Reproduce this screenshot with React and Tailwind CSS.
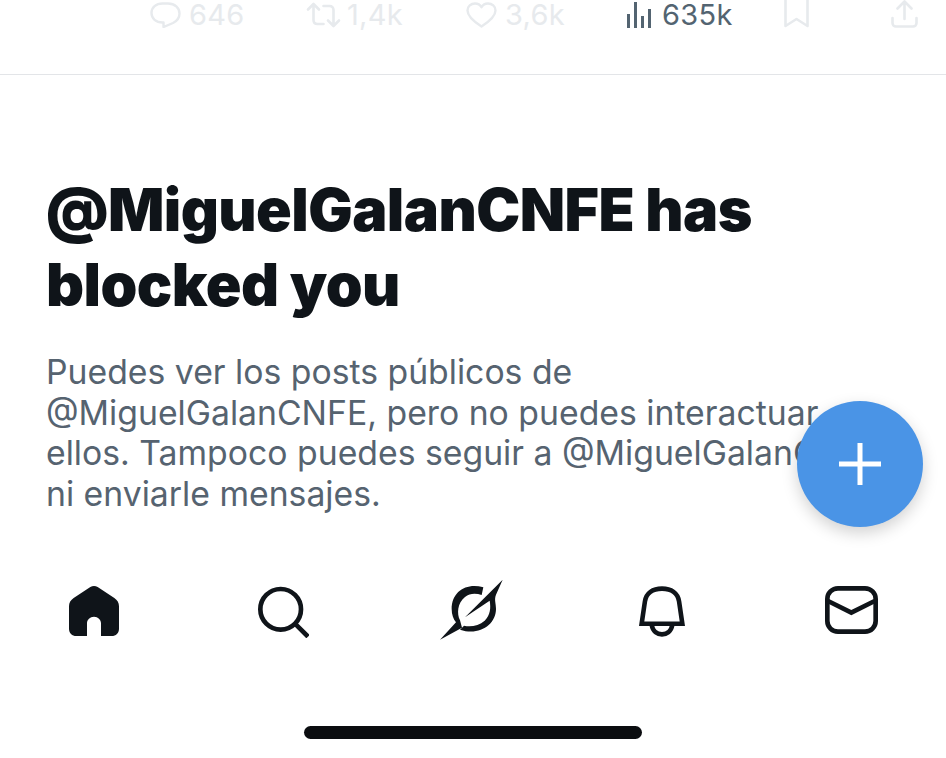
// Blocked profile screen, mobile layout
import React from 'react'

const FAINT = '#e7eaed'

function Stat({ icon, value, color, gap, className }) {
  return (
    <div className={`flex items-center ${gap} ${className}`}>
      {icon}
      {value && <span className="text-[29px] leading-[30px] tracking-[0.3px] whitespace-nowrap" style={{ color }}>{value}</span>}
    </div>
  )
}

function Comment() {
  return (
    <svg width="31" height="26" viewBox="0 0 31 26" fill="none" stroke={FAINT} strokeWidth="2.4" strokeLinejoin="round">
      <path d="M12.500 1.500h5.500c6.800 0 11.500 4.500 11.500 10 0 4-2.500 7.500-6.500 9.500l-9.500 4v-4.500h-1C6 20.500 1.500 16.500 1.500 11S6 1.500 12.500 1.500z" />
    </svg>
  )
}

function Retweet() {
  return (
    <svg width="35" height="26" viewBox="0 0 34 26" fill="none" stroke={FAINT} strokeWidth="2.600" strokeLinecap="round" strokeLinejoin="round">
      <path d="M1.500 7.500L7 2l5.500 5.500M7 3v15c0 2.500 1.500 4 4 4h6" />
      <path d="M32.500 18.500L27 24l-5.500-5.500M27 23V8c0-2.500-1.500-4-4-4h-6" />
    </svg>
  )
}

function Heart() {
  return (
    <svg width="31" height="26" viewBox="0 0 31 26" fill="none" stroke={FAINT} strokeWidth="2.4" strokeLinejoin="round">
      <path d="M15.500 24.500C7 19 1.500 14 1.500 8.500c0-4.200 3.500-7 7.500-7 3 0 5.200 1.400 6.500 3.800 1.300-2.400 3.500-3.800 6.500-3.800 4 0 7.500 2.800 7.500 7 0 5.500-5.500 10.500-14 16z" />
    </svg>
  )
}

function Views() {
  return (
    <svg width="24" height="28" viewBox="0 0 24 28" fill="#536471">
      <rect x="0" y="13" width="3" height="14" />
      <rect x="7" y="1" width="3" height="26" />
      <rect x="14" y="15" width="3" height="12" />
      <rect x="21" y="8" width="3" height="19" />
    </svg>
  )
}

function Bookmark() {
  return (
    <svg width="25" height="28" viewBox="0 0 25 28" fill="none" stroke={FAINT} strokeWidth="2.600" strokeLinejoin="round">
      <path d="M1.500 0v26l11-7 11 7V0" />
    </svg>
  )
}

function Share() {
  return (
    <svg width="27" height="28" viewBox="0 0 27 28" fill="none" stroke={FAINT} strokeWidth="2.600" strokeLinecap="round" strokeLinejoin="round">
      <path d="M6.500 8.500l7-7 7 7M13.500 2v17" />
      <path d="M1.500 18v5c0 2 1.500 3.500 3.500 3.500h17c2 0 3.500-1.500 3.500-3.500v-5" />
    </svg>
  )
}

function Home() {
  return (
    <svg width="50" height="50" viewBox="58 47 150 150" fill="#0f1419">
      <path d="M122 50c7-4 15-4 22 0l50 33c9 6 14 14 14 25v67c0 13-9 22-22 22h-32v-38c0-11-9-20-21-20s-21 9-21 20v38H80c-13 0-22-9-22-22v-67c0-11 5-19 14-25z" />
    </svg>
  )
}

function Search() {
  return (
    <svg width="52" height="52" viewBox="620 42 156 156" fill="none" stroke="#0f1419" strokeWidth="14" strokeLinecap="round">
      <circle cx="691" cy="112" r="61" />
      <path d="M736 157l32 32" strokeLinecap="square" />
    </svg>
  )
}

function Explore() {
  return (
    <svg width="64" height="62" viewBox="57 28 192 186" fill="#0f1419">
      <path d="M190 53C140 38 95 65 95 118c0 17 5 30 13 40l-48 52 66-36-6-22c-10-20-8-52 15-70 15-12 33-11 50-6z" />
      <path d="M248 30L135 143l74-50c4 22 2 42-15 60-17 15-42 20-62 15l-12 12c57 20 108-15 108-62 0-18-6-28 0-43z" />
    </svg>
  )
}

function Bell() {
  return (
    <svg width="46" height="51" viewBox="55 46 140 153" fill="none" stroke="#0f1419" strokeWidth="14">
      <path d="M63 160l10-68c4-26 24-39 52-39s48 13 52 39l10 68z" strokeLinejoin="miter" />
      <path d="M94 165c6 36 56 36 62 0" />
    </svg>
  )
}

function Mail() {
  return (
    <svg width="53" height="48" viewBox="613 50 159 144" fill="none" stroke="#0f1419" strokeWidth="14">
      <rect x="620" y="57" width="145" height="130" rx="32" />
      <path d="M622 95l70 35 70-35" strokeLinejoin="miter" />
    </svg>
  )
}

export default function App() {
  return (
    <div className="relative w-[946px] h-[758px] overflow-hidden bg-white font-['Inter','Liberation_Sans',sans-serif]">
      {/* cut off action bar of the tweet above */}
      <div className="h-[75px] border-b border-[#e3e5e8] pl-[150px] flex items-start">
        <Stat icon={<Comment />} value="646" color={FAINT} gap="gap-[8px]" className="w-[100px]" />
        <Stat icon={<Retweet />} value="1,4k" color={FAINT} gap="gap-[6px]" className="w-[104px] ml-[56px]" />
        <Stat icon={<Heart />} value="3,6k" color={FAINT} gap="gap-[8px]" className="w-[104px] ml-[56px]" />
        <Stat icon={<Views />} value="635k" color="#536471" gap="gap-[11px]" className="w-[110px] ml-[57px]" />
        <Stat icon={<Bookmark />} className="ml-[47px]" gap="" />
        <Stat icon={<Share />} className="ml-[82px]" gap="" />
      </div>

      <div className="pl-[46px] pr-[56px] pt-[97px]">
        <h1 className="text-[59px] leading-[75px] font-black tracking-[-0.55px] text-[#0f1419]">
          @MiguelGalanCNFE has blocked you
        </h1>
        {/* "con" sits behind the button in the picture */}
        <p className="mt-[30px] text-[33.75px] leading-[40.7px] text-[#566370]">
          Puedes ver los posts públicos de @MiguelGalanCNFE, pero no puedes interactuar <span className="invisible">con</span> ellos. Tampoco puedes seguir a @MiguelGalanCNFE ni enviarle mensajes.
        </p>
      </div>

      <nav className="grid grid-cols-5 items-start mt-[71px]">
        <div className="flex justify-center pr-[2px]"><Home /></div>
        <div className="flex justify-center pr-[2px]"><Search /></div>
        <div className="flex justify-center pr-[4px] -mt-[7px]"><Explore /></div>
        <div className="flex justify-center"><Bell /></div>
        <div className="flex justify-center"><Mail /></div>
      </nav>

      <div className="absolute left-[304px] top-[726px] w-[338px] h-[13px] rounded-full bg-[#0b0d10]" />

      <button className="absolute left-[797px] top-[401px] w-[126px] h-[126px] rounded-full bg-[#4a94e6] shadow-[0_6px_16px_rgba(0,0,0,0.18)] flex items-center justify-center">
        <svg width="42" height="42" viewBox="0 0 42 42" fill="white">
          <rect x="18.500" y="0" width="5" height="42" />
          <rect x="0" y="18.500" width="42" height="5" />
        </svg>
      </button>
    </div>
  )
}
